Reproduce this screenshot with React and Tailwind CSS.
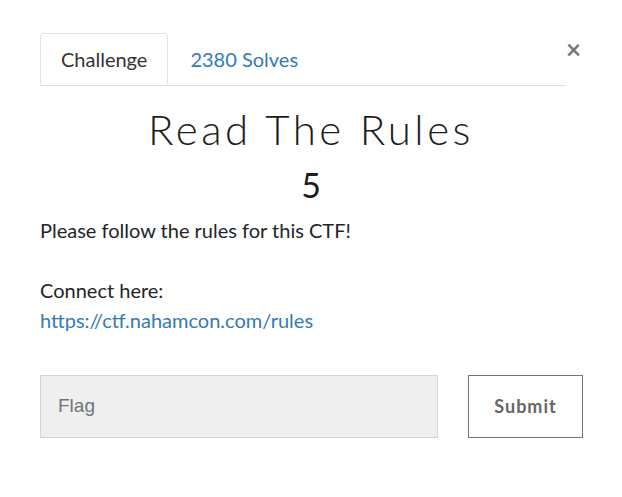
import React from 'react';

const App = () => {
  return (
    <div className="w-[622px] h-[497px] bg-white relative" style={{ fontFamily: 'Lato, "Liberation Sans", sans-serif' }}>
      {/* close button */}
      <button className="absolute left-[566px] top-[36px] text-[#777] text-[26px] font-bold leading-none">×</button>

      <div className="pt-[33px] pl-[40px] pr-[39px]">
        {/* tabs */}
        <div className="flex w-[526px] border-b border-[#dee2e6]">
          <div className="h-[52px] px-[20px] flex items-center border border-[#dee2e6] border-b-white -mb-px rounded-t-[4px] text-[#333] text-[20px]">
            Challenge
          </div>
          <div className="h-[52px] px-[22px] flex items-center text-[#337ab7] text-[20px]">
            2380 Solves
          </div>
        </div>

        <h2 className="text-center text-[#1d1d1d] text-[42px] font-light tracking-[3.5px] mt-[17px] leading-[52px] pr-px">
          Read The Rules
        </h2>
        <h3 className="text-center text-[#1d1d1d] text-[34px] leading-[44px] mt-[8px] pr-px">5</h3>

        <div className="text-[#212529] text-[20px] leading-[30px] mt-[8px]">
          <p>Please follow the rules for this CTF!</p>
          <p className="mt-[30px]">Connect here:</p>
          <a className="text-[#337ab7]">https://ctf.nahamcon.com/rules</a>
        </div>

        <div className="flex mt-[40px] gap-[30px]">
          <div className="w-[398px] shrink-0 h-[63px] bg-[#efefef] border border-[#d4d4d8] flex items-center px-[17px]">
            <span className="text-[#6c757d] text-[19px]" style={{ fontFamily: '"Liberation Sans", Arial, sans-serif' }}>Flag</span>
          </div>
          <button className="w-[115px] shrink-0 h-[63px] border border-[#6c757d] text-[#666] text-[18px] font-bold tracking-[1px]">
            Submit
          </button>
        </div>
      </div>
    </div>
  );
};

export default App;
